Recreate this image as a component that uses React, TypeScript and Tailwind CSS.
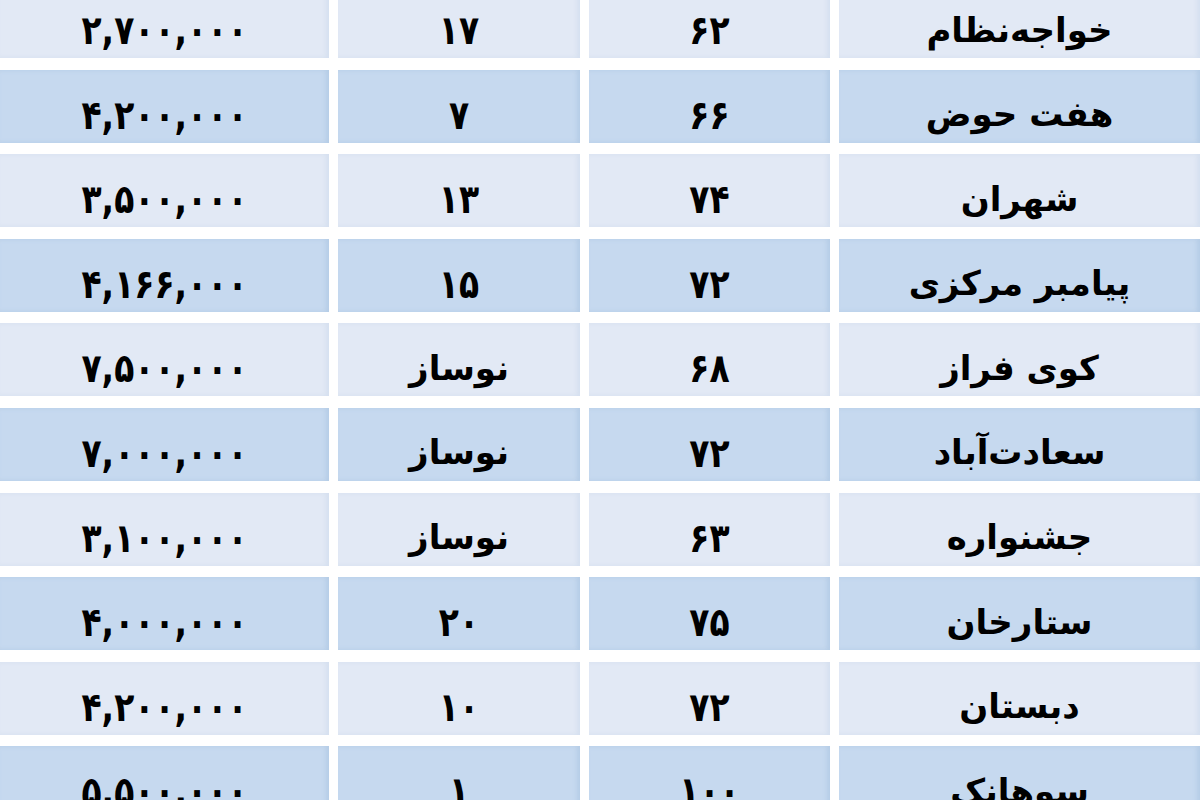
import React from 'react'

// Persian rental table: neighbourhood, area (m²), age, monthly rent
type Row = { name: string; area: string; age: string; price: string }

const rows: Row[] = [
  { name: 'خواجه‌نظام', area: '۶۲', age: '۱۷', price: '۲,۷۰۰,۰۰۰' },
  { name: 'هفت حوض', area: '۶۶', age: '۷', price: '۴,۲۰۰,۰۰۰' },
  { name: 'شهران', area: '۷۴', age: '۱۳', price: '۳,۵۰۰,۰۰۰' },
  { name: 'پیامبر مرکزی', area: '۷۲', age: '۱۵', price: '۴,۱۶۶,۰۰۰' },
  { name: 'کوی فراز', area: '۶۸', age: 'نوساز', price: '۷,۵۰۰,۰۰۰' },
  { name: 'سعادت‌آباد', area: '۷۲', age: 'نوساز', price: '۷,۰۰۰,۰۰۰' },
  { name: 'جشنواره', area: '۶۳', age: 'نوساز', price: '۳,۱۰۰,۰۰۰' },
  { name: 'ستارخان', area: '۷۵', age: '۲۰', price: '۴,۰۰۰,۰۰۰' },
  { name: 'دبستان', area: '۷۲', age: '۱۰', price: '۴,۲۰۰,۰۰۰' },
  { name: 'سوهانک', area: '۱۰۰', age: '۱', price: '۵,۵۰۰,۰۰۰' },
]

// digits in the source are tall and narrow, so numbers get stretched a bit
const isNumber = (s: string) => /^[۰-۹,]+$/.test(s)

function Cell({ text, blue }: { text: string; blue: boolean }) {
  return (
    <div
      className={
        blue
          ? 'flex items-center justify-center pt-[16px] bg-[#c6d9ef] shadow-[inset_-3px_0_4px_rgba(150,180,215,0.35)]'
          : 'flex items-center justify-center pt-[16px] bg-[#e2e9f5] shadow-[inset_-3px_0_4px_rgba(190,205,230,0.35)]'
      }
    >
      <span
        className={
          isNumber(text)
            ? 'inline-block text-[33px] font-bold leading-none text-black whitespace-nowrap scale-y-[1.22]'
            : 'inline-block text-[34px] font-bold leading-none text-black whitespace-nowrap'
        }
      >
        {text}
      </span>
    </div>
  )
}

export default function App() {
  return (
    <div
      dir="rtl"
      className="w-[1200px] h-[800px] overflow-hidden bg-white"
      style={{ fontFamily: '"DejaVu Sans", "Noto Sans", sans-serif' }}
    >
      <div className="mt-[-15px] grid grid-cols-[361px_241px_242px_329px] auto-rows-[73px] gap-x-[9px] gap-y-[11.6px]">
        {rows.map((r, i) => {
          const blue = i % 2 === 1
          return (
            <React.Fragment key={i}>
              <Cell text={r.name} blue={blue} />
              <Cell text={r.area} blue={blue} />
              <Cell text={r.age} blue={blue} />
              <Cell text={r.price} blue={blue} />
            </React.Fragment>
          )
        })}
      </div>
    </div>
  )
}
